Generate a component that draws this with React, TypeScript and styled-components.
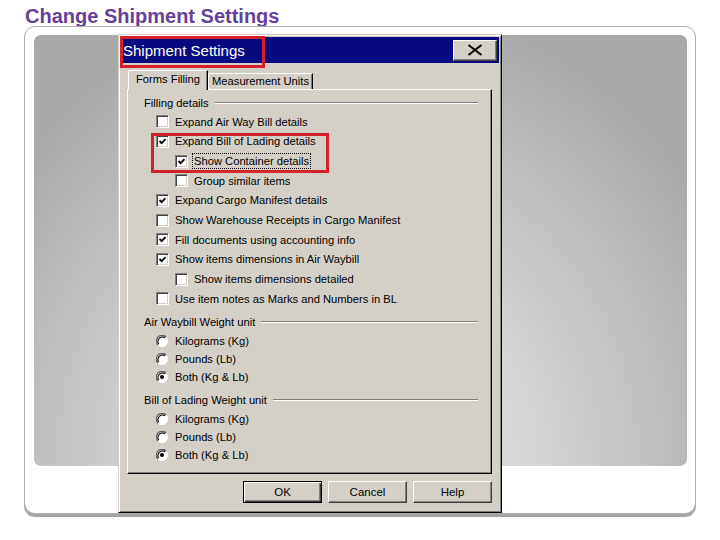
import styled, { createGlobalStyle } from "styled-components";

const GlobalStyle = createGlobalStyle`
  html, body {
    margin: 0;
    padding: 0;
    background: #fff;
  }
  body {
    font-family: "Liberation Sans", Arial, sans-serif;
  }
`;

const Page = styled.div`
  width: 720px;
  height: 540px;
  overflow: hidden;
`;

const Heading = styled.h1`
  margin: 6px 0 0 25px;
  height: 20px;
  font: bold 20px/20px "Liberation Sans", Arial, sans-serif;
  color: #663f99;
`;

const Frame = styled.div`
  position: relative;
  box-sizing: border-box;
  margin-left: 24px;
  width: 672px;
  height: 488px;
  padding: 8px 0 0 9px;
  border: 1px solid #adadad;
  border-radius: 11px;
  background: #fff;
  box-shadow: 0 3px 0 #a3a3a3;
`;

const Backdrop = styled.div`
  width: 653px;
  height: 431px;
  border-radius: 7px;
  background: radial-gradient(
    ellipse 430px 470px at 48% 100%,
    #e9e9e9 0%,
    #d4d4d4 45%,
    #a9a9a9 100%
  );
`;

const Window = styled.div`
  position: absolute;
  left: 93px;
  top: 7px;
  box-sizing: border-box;
  width: 384px;
  height: 479px;
  display: flex;
  flex-direction: column;
  padding: 2px;
  background: #d4d0c8;
  border: 1px solid;
  border-color: #d4d0c8 #000 #000 #d4d0c8;
  box-shadow: inset 1px 1px #fff, inset -1px -1px #808080;
  font: 11.2px "Liberation Sans", Arial, sans-serif;
  color: #000;
`;

const TitleBar = styled.div`
  position: relative;
  height: 26px;
  display: flex;
  align-items: center;
  justify-content: space-between;
  padding: 0 2px 0 2px;
  background: #0a0a80;
`;

const Title = styled.span`
  color: #fff;
  font-size: 15px;
`;

const Callout = styled.span`
  position: absolute;
  left: -1px;
  top: -1px;
  width: 145px;
  height: 32px;
  box-sizing: border-box;
  border: 3px solid #d3202a;
  pointer-events: none;
`;

const CloseButton = styled.button`
  box-sizing: border-box;
  width: 44px;
  height: 21px;
  padding: 0;
  display: flex;
  align-items: center;
  justify-content: center;
  background: #d4d0c8;
  border: 1px solid;
  border-color: #fff #404040 #404040 #fff;
  box-shadow: inset -1px -1px #808080;
`;

const Body = styled.div`
  flex: 1;
  display: flex;
  flex-direction: column;
  padding: 7px 7px 0 6px;
`;

const TabStrip = styled.div`
  display: flex;
  align-items: flex-end;
  height: 19px;
  padding-left: 1px;
`;

const Tab = styled.div<{ $active?: boolean }>`
  position: relative;
  z-index: ${(p) => (p.$active ? 1 : 0)};
  box-sizing: border-box;
  height: ${(p) => (p.$active ? "20px" : "16px")};
  margin-bottom: ${(p) => (p.$active ? "-1px" : "0")};
  padding: ${(p) => (p.$active ? "2px 7px 0 7px" : "1px 3px 0 3px")};
  background: #d4d0c8;
  border-top: 1px solid #fff;
  border-left: 1px solid #fff;
  border-right: 1px solid #000;
  border-top-left-radius: 2px;
  box-shadow: inset -1px 0 #808080;
  white-space: nowrap;
`;

const TabPanel = styled.div`
  box-sizing: border-box;
  height: 385px;
  display: flex;
  flex-direction: column;
  padding: 3px 13px 0 16px;
  border-top: 1px solid #fff;
  border-left: 1px solid #fff;
  border-right: 1px solid #000;
  border-bottom: 1px solid #000;
  box-shadow: inset -1px -1px #808080;
`;

const GroupHeader = styled.div<{ $gap?: number }>`
  display: flex;
  align-items: center;
  height: 19px;
  margin-top: ${(p) => p.$gap ?? 0}px;
`;

const Rule = styled.span`
  flex: 1;
  margin-left: 6px;
  border-top: 1px solid #808080;
  border-bottom: 1px solid #fff;
`;

const Row = styled.div<{ $indent?: boolean; $radio?: boolean }>`
  display: flex;
  align-items: center;
  gap: 6px;
  height: ${(p) => (p.$radio ? "18px" : "19.67px")};
  padding-left: ${(p) => (p.$indent ? 31 : 12)}px;
  white-space: nowrap;
`;

const Highlight = styled.div`
  position: relative;
  &::after {
    content: "";
    position: absolute;
    left: 7px;
    top: 1px;
    width: 178px;
    height: 40px;
    box-sizing: border-box;
    border: 3px solid #d3202a;
  }
`;

const Box = styled.span`
  display: inline-flex;
  align-items: center;
  justify-content: center;
  flex: none;
  box-sizing: border-box;
  width: 13px;
  height: 13px;
  background: #fff;
  border: 1px solid;
  border-color: #808080 #fff #fff #808080;
  box-shadow: inset 1px 1px #404040, inset -1px -1px #d4d0c8;
`;

const Focus = styled.span`
  outline: 1px dotted #000;
  outline-offset: 1px;
`;

const Buttons = styled.div`
  display: flex;
  justify-content: flex-end;
  gap: 6px;
  margin-top: 7px;
`;

const PushButton = styled.button<{ $default?: boolean }>`
  box-sizing: border-box;
  width: 79px;
  height: 22px;
  padding: 0;
  background: #d4d0c8;
  font: 11.5px "Liberation Sans", Arial, sans-serif;
  color: #000;
  border: 1px solid;
  border-color: ${(p) =>
    p.$default ? "#000" : "#fff #404040 #404040 #fff"};
  box-shadow: ${(p) =>
    p.$default
      ? "inset 1px 1px #fff, inset -1px -1px #404040, inset -2px -2px #808080"
      : "inset -1px -1px #808080"};
`;

function CloseGlyph() {
  return (
    <svg width="16" height="12" viewBox="0 0 16 12">
      <path d="M1.5 1 L14.5 11 M14.5 1 L1.5 11" stroke="#000" strokeWidth="2" />
    </svg>
  );
}

function Check({ checked, label, indent, focus }: {
  checked?: boolean;
  label: string;
  indent?: boolean;
  focus?: boolean;
}) {
  return (
    <Row $indent={indent}>
      <Box>
        {checked && (
          <svg width="7" height="7" viewBox="0 0 7 7">
            <polyline points="0.5,3 2.6,5.2 6.5,1.2" fill="none" stroke="#000" strokeWidth="1.9" />
          </svg>
        )}
      </Box>
      {focus ? <Focus>{label}</Focus> : <span>{label}</span>}
    </Row>
  );
}

function Radio({ checked, label }: { checked?: boolean; label: string }) {
  return (
    <Row $radio>
      <svg width="12" height="12" viewBox="0 0 12 12" style={{ flex: "none", marginRight: 1 }}>
        <circle cx="6" cy="6" r="5.5" fill="#fff" />
        <path d="M10.1 1.9 A5.8 5.8 0 0 1 1.9 10.1" fill="none" stroke="#fff" />
        <path d="M1.9 10.1 A5.8 5.8 0 0 1 10.1 1.9" fill="none" stroke="#606060" strokeWidth="1.2" />
        <path d="M2.8 9.2 A4.6 4.6 0 0 1 9.2 2.8" fill="none" stroke="#111" strokeWidth="1.2" />
        {checked && <circle cx="6" cy="6" r="2" fill="#000" />}
      </svg>
      <span>{label}</span>
    </Row>
  );
}

function WeightGroup({ title, gap }: { title: string; gap: number }) {
  return (
    <>
      <GroupHeader $gap={gap}>
        <span>{title}</span>
        <Rule />
      </GroupHeader>
      <Radio label="Kilograms (Kg)" />
      <Radio label="Pounds (Lb)" />
      <Radio label="Both (Kg & Lb)" checked />
    </>
  );
}

export default function App() {
  return (
    <Page>
      <GlobalStyle />
      <Heading>Change Shipment Settings</Heading>
      <Frame>
        <Backdrop />
        <Window>
          <TitleBar>
            <Title>Shipment Settings</Title>
            <CloseButton aria-label="Close">
              <CloseGlyph />
            </CloseButton>
            <Callout />
          </TitleBar>
          <Body>
            <TabStrip>
              <Tab $active>Forms Filling</Tab>
              <Tab>Measurement Units</Tab>
            </TabStrip>
            <TabPanel>
              <GroupHeader>
                <span>Filling details</span>
                <Rule />
              </GroupHeader>
              <Check label="Expand Air Way Bill details" />
              <Highlight>
                <Check label="Expand Bill of Lading details" checked />
                <Check label="Show Container details" checked indent focus />
              </Highlight>
              <Check label="Group similar items" indent />
              <Check label="Expand Cargo Manifest details" checked />
              <Check label="Show Warehouse Receipts in Cargo Manifest" />
              <Check label="Fill documents using accounting info" checked />
              <Check label="Show items dimensions in Air Waybill" checked />
              <Check label="Show items dimensions detailed" indent />
              <Check label="Use item notes as Marks and Numbers in BL" />
              <WeightGroup title="Air Waybill Weight unit" gap={4} />
              <WeightGroup title="Bill of Lading Weight unit" gap={5} />
            </TabPanel>
            <Buttons>
              <PushButton $default>OK</PushButton>
              <PushButton>Cancel</PushButton>
              <PushButton>Help</PushButton>
            </Buttons>
          </Body>
        </Window>
      </Frame>
    </Page>
  );
}
